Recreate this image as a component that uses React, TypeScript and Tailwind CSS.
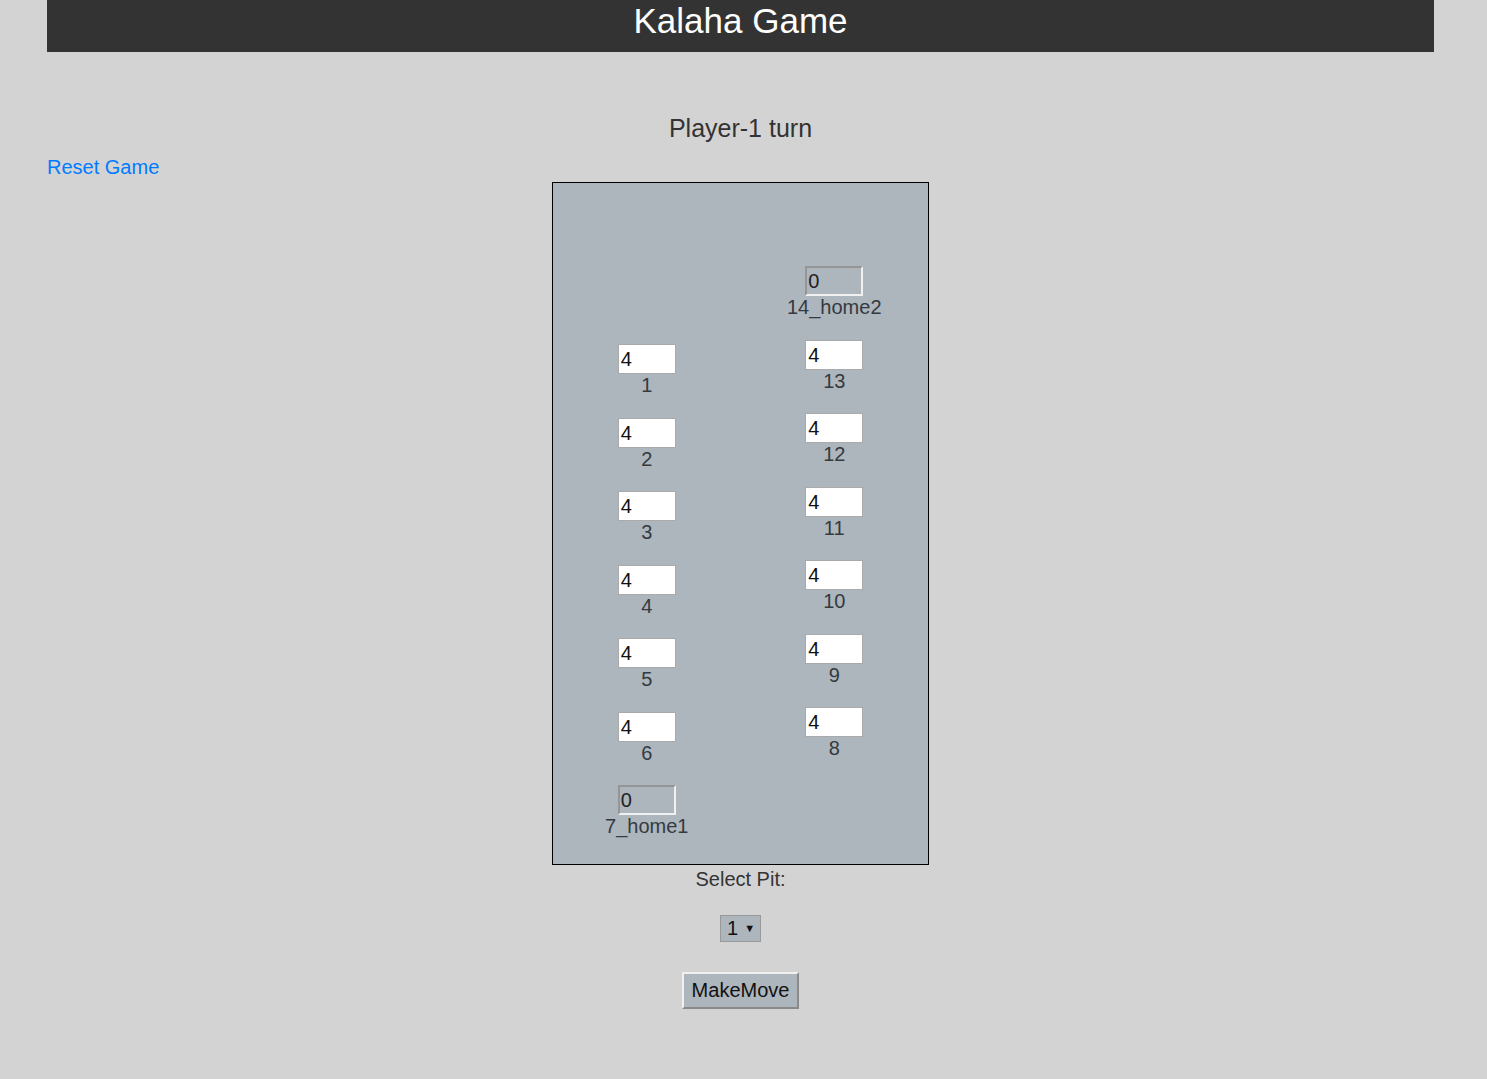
import React from "react";

const leftPits = [1, 2, 3, 4, 5, 6];
const rightPits = [13, 12, 11, 10, 9, 8];

function Pit({ value, label }: { value: number; label: string }) {
  return (
    <div className="flex flex-col items-center">
      <div className="w-[58px] h-[30px] bg-white border border-[#aaaaaa] px-[2px] text-[20px] leading-[28px] text-[#111]">
        {value}
      </div>
      <div className="text-[20px] leading-[23px] text-[#343a40]">{label}</div>
    </div>
  );
}

function Home({ value, label }: { value: number; label: string }) {
  return (
    <div className="flex flex-col items-center">
      <div className="w-[58px] h-[30px] border-2 border-t-[#959595] border-l-[#959595] border-b-[#f0f0f0] border-r-[#f0f0f0] px-[1px] text-[20px] leading-[26px] text-[#222]">
        {value}
      </div>
      <div className="text-[20px] leading-[23px] text-[#343a40]">{label}</div>
    </div>
  );
}

export default function App() {
  return (
    <div className="min-h-screen bg-[#d3d3d3] font-['Liberation_Sans',Arial,sans-serif]">
      <div className="ml-[47px] w-[1387px]">
        <div className="h-[52px] bg-[#333333] text-center text-white text-[35px] leading-[42px]">
          Kalaha Game
        </div>

        <div className="mt-[62px] text-center text-[25px] leading-[28px] text-[#333]">
          Player-1 turn
        </div>

        <a href="#" className="block mt-[13px] w-fit text-[20px] leading-[24px] text-[#007bff]">
          Reset Game
        </a>

        <div className="mx-auto mt-[3px] w-[377px] h-[683px] border border-black bg-[#adb5bd] grid grid-cols-2">
          <div className="flex flex-col items-center pt-[161px] gap-[20.5px]">
            {leftPits.map((p) => (
              <Pit key={p} value={4} label={String(p)} />
            ))}
            <Home value={0} label="7_home1" />
          </div>
          <div className="flex flex-col items-center pt-[83px] gap-[20.5px]">
            <Home value={0} label="14_home2" />
            {rightPits.map((p) => (
              <Pit key={p} value={4} label={String(p)} />
            ))}
          </div>
        </div>

        <div className="mt-[3px] text-center text-[20px] leading-[23px] text-[#333]">Select Pit:</div>

        <div className="mt-[24px] flex justify-center">
          <div className="w-[41px] h-[27px] bg-[#adb5bd] border border-[#999] flex items-center pl-[6px] gap-[6px] text-[20px] text-[#111]">
            <span className="leading-[25px]">1</span>
            <span className="text-[11px] leading-none">▼</span>
          </div>
        </div>

        <div className="mt-[30px] flex justify-center">
          <button className="w-[117px] h-[37px] bg-[#adb5bd] border-2 border-t-[#f0f0f0] border-l-[#f0f0f0] border-b-[#8a8a8a] border-r-[#8a8a8a] text-[20px] leading-[33px] text-[#111]">
            MakeMove
          </button>
        </div>
      </div>
    </div>
  );
}
